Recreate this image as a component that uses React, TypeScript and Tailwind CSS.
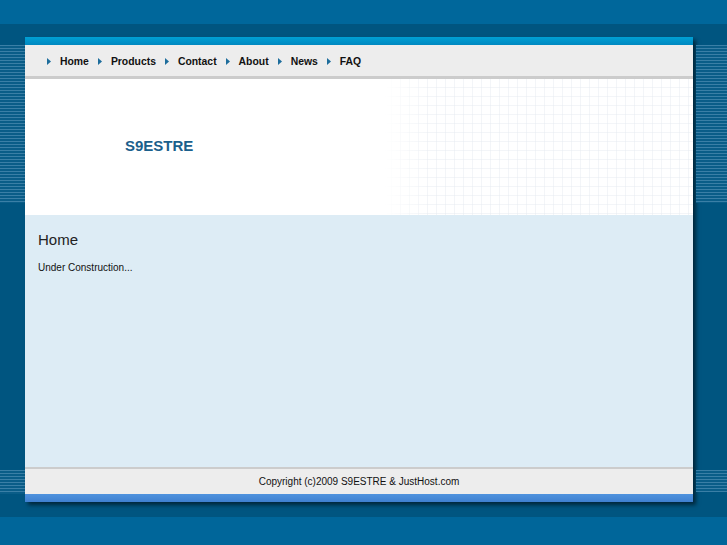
const navItems = ['Home', 'Products', 'Contact', 'About', 'News', 'FAQ'];

function Stripes({ className = '' }: { className?: string }) {
  return (
    <div
      className={`bg-[repeating-linear-gradient(to_bottom,#3a7fa6_0px,#3a7fa6_1px,#0a5d88_1px,#0a5d88_3px)] ${className}`}
    />
  );
}

function GridPattern() {
  return (
    <svg className="absolute right-0 top-0 h-full w-[310px]" aria-hidden="true">
      <defs>
        <pattern id="grid" width="9" height="9" patternUnits="userSpaceOnUse">
          <path d="M9 0V9M0 9H9" stroke="#e6ebf0" strokeWidth="1" fill="none" />
        </pattern>
        <linearGradient id="fade" x1="0" x2="1" y1="0" y2="0">
          <stop offset="0" stopColor="#fff" stopOpacity="0" />
          <stop offset="0.15" stopColor="#fff" stopOpacity="1" />
        </linearGradient>
        <mask id="fadeMask">
          <rect width="100%" height="100%" fill="url(#fade)" />
        </mask>
      </defs>
      <rect width="100%" height="100%" fill="url(#grid)" mask="url(#fadeMask)" />
    </svg>
  );
}

export default function App() {
  return (
    <div className="flex min-h-[545px] w-full flex-col bg-[#006699] font-['Liberation_Sans',Arial,sans-serif]">
      <div className="h-[24px] bg-[#00679b]" />
      <div className="flex h-[493px] bg-[#005580] pt-[13px]">
        <div className="flex w-[25px] flex-col">
          <div className="h-[8px]" />
          <Stripes className="h-[158px]" />
          <div className="h-[267px]" />
          <Stripes className="h-[24px]" />
        </div>

        <div className="flex h-[465px] w-[668px] flex-col shadow-[3px_3px_4px_rgba(0,0,0,0.55)]">
          <div className="h-[8px] bg-gradient-to-b from-[#00a0d4] to-[#0088c0]" />
          <nav className="flex h-[31px] items-center gap-[9px] bg-[#ededed] pl-[22px] pt-[3px] text-[10.4px] font-bold text-[#111]">
            {navItems.map((item) => (
              <div key={item} className="flex items-center gap-[9px]">
                <svg width="4" height="7" viewBox="0 0 4 7" aria-hidden="true">
                  <path d="M0 0L4 3.5L0 7Z" fill="#1d6d9c" />
                </svg>
                <span>{item}</span>
              </div>
            ))}
          </nav>
          <div className="h-[3px] bg-[#cccccc]" />
          <header className="relative flex h-[136px] items-center bg-white pl-[100px]">
            <GridPattern />
            <span className="relative -mt-[2px] text-[15px] font-bold text-[#1b5f8c]">S9ESTRE</span>
          </header>
          <main className="flex flex-1 flex-col bg-[#ddecf5] px-[13px] pt-[16px]">
            <h1 className="text-[15px] leading-[18px] text-[#222]">Home</h1>
            <p className="mt-[11px] text-[10px] text-[#111]">Under Construction...</p>
          </main>
          <div className="h-[2px] bg-[#cccccc]" />
          <footer className="flex h-[25px] items-center justify-center bg-[#ededed] text-[10px] text-[#111]">
            Copyright (c)2009 S9ESTRE &amp; JustHost.com
          </footer>
          <div className="h-[8px] bg-gradient-to-b from-[#4f93de] to-[#3f80d0]" />
        </div>

        <div className="flex flex-1 flex-col">
          <div className="h-[8px]" />
          <Stripes className="ml-[3px] h-[158px]" />
          <div className="h-[267px]" />
          <Stripes className="ml-[3px] h-[22px]" />
        </div>
      </div>
      <div className="h-[28px] bg-[#00669a]" />
    </div>
  );
}
